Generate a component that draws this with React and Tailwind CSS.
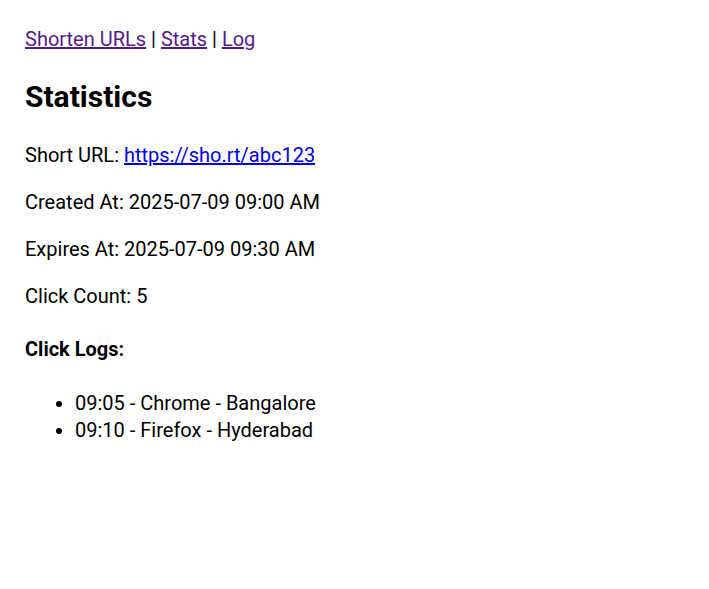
import React from "react";

const logs = [
  { time: "09:05", browser: "Chrome", location: "Bangalore" },
  { time: "09:10", browser: "Firefox", location: "Hyderabad" },
];

export default function App() {
  return (
    <div className="min-h-screen bg-white px-[25px] pt-[26px] text-[20px] leading-[27px] text-black font-['Roboto',sans-serif]">
      <nav>
        <a href="#" className="text-[#551a8b] underline">Shorten URLs</a> |{" "}
        <a href="#" className="text-[#551a8b] underline">Stats</a> |{" "}
        <a href="#" className="text-[#551a8b] underline">Log</a>
      </nav>

      <h2 className="mt-[25px] mb-[26px] text-[30px] font-bold leading-[38px]">Statistics</h2>

      <p className="my-[20px]">
        Short URL:{" "}
        <a href="#" className="text-[#0000ee] underline">https://sho.rt/abc123</a>
      </p>
      <p className="my-[20px]">Created At: 2025-07-09 09:00 AM</p>
      <p className="my-[20px]">Expires At: 2025-07-09 09:30 AM</p>
      <p className="my-[20px]">Click Count: 5</p>

      <h4 className="mt-[26px] mb-[27px] font-bold">Click Logs:</h4>
      <ul className="list-disc pl-[50px] my-[20px]">
        {logs.map((l, i) => (
          <li key={i}>
            {l.time} - {l.browser} - {l.location}
          </li>
        ))}
      </ul>
    </div>
  );
}
